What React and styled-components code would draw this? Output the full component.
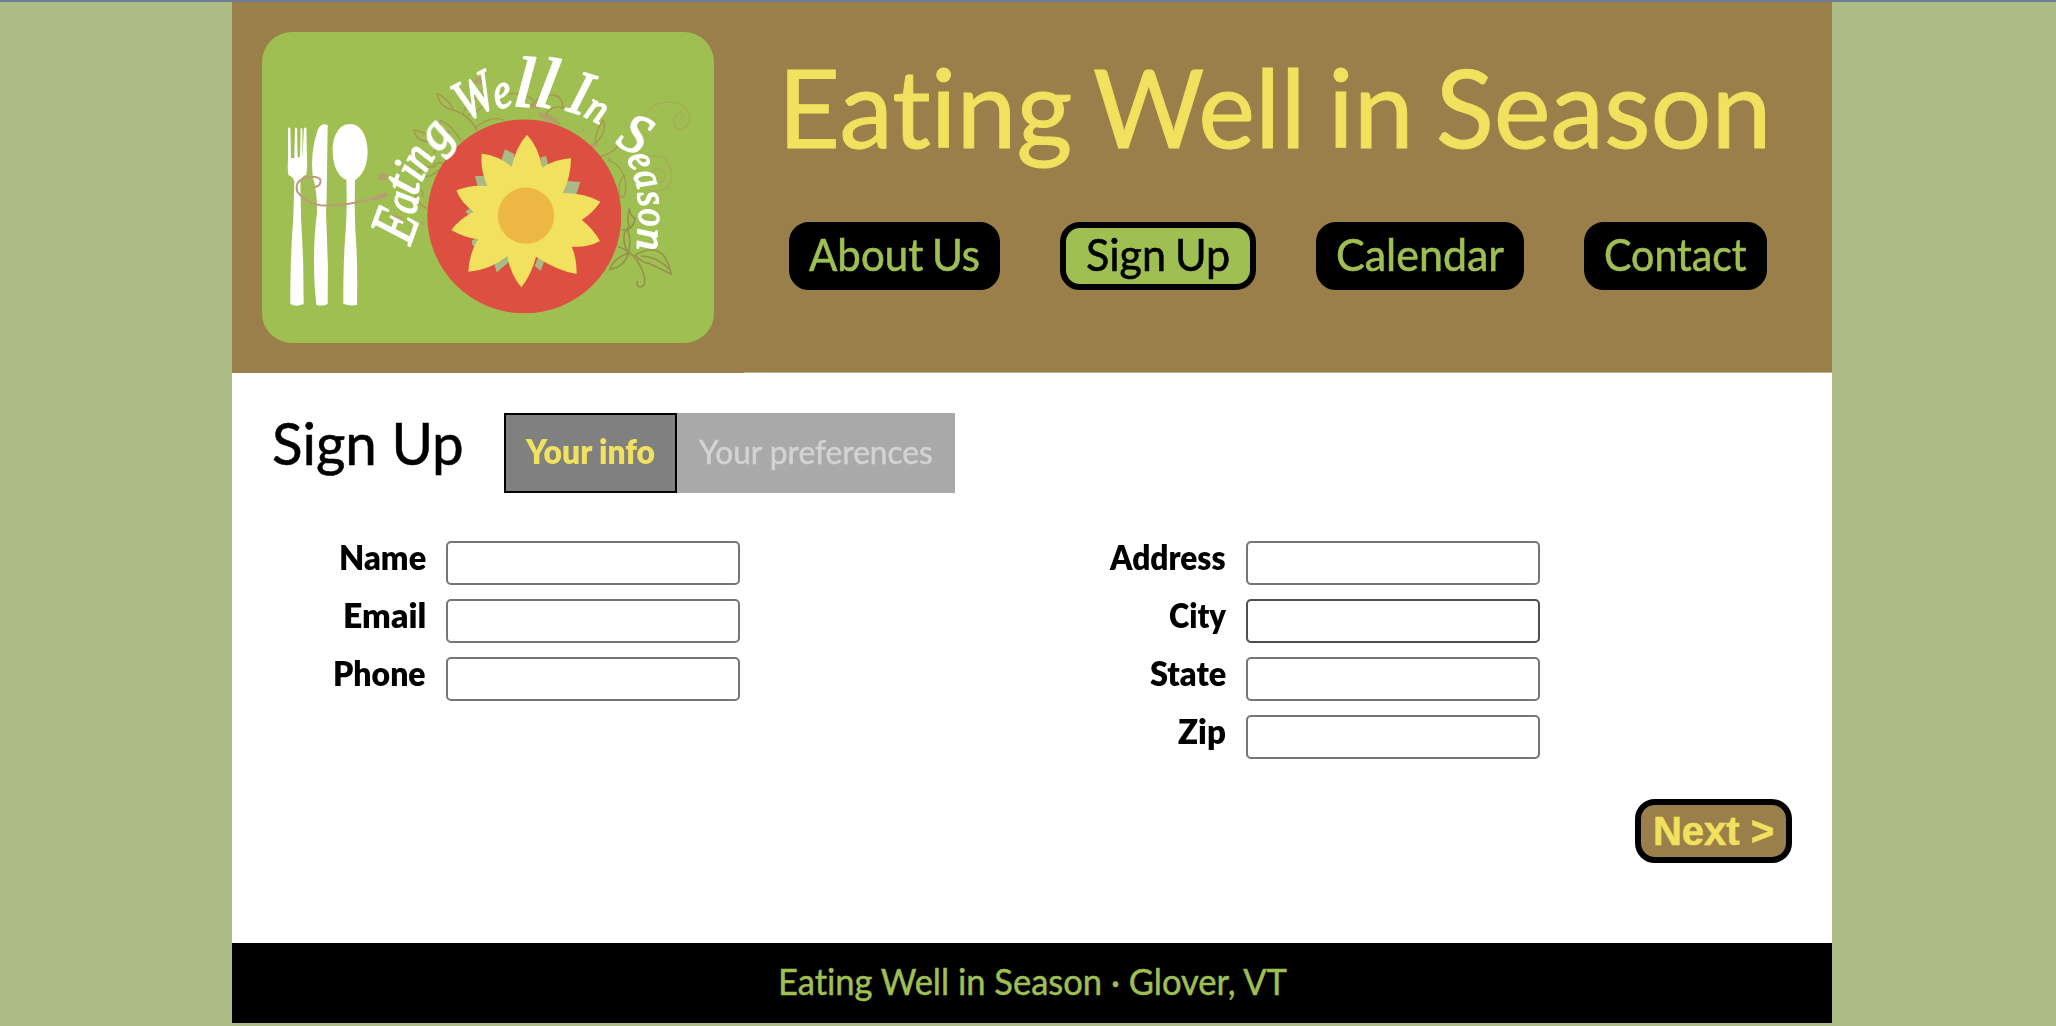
import React, { useLayoutEffect, useRef } from "react";
import styled, { createGlobalStyle } from "styled-components";

const c = {
  sage: "#adbc85",
  brown: "#9b7f4a",
  lime: "#9fbf53",
  yellow: "#f1e15e",
};

const GlobalStyle = createGlobalStyle`
  *, *::before, *::after { box-sizing: border-box; }
  body {
    margin: 0;
    background: ${c.sage};
    font-family: Lato, "Open Sans", sans-serif;
    font-variant-ligatures: none;
    color: #000;
  }
`;

const Screen = styled.div`
  height: 1026px;
  overflow: hidden;
  border-top: 2px solid #6d7c98;
  background: ${c.sage};
`;

const Page = styled.div`
  width: 1600px;
  margin: 0 224px 0 232px;
`;

const Header = styled.header`
  display: grid;
  grid-template-columns: 512px minmax(0, 1fr);
  align-items: start;
`;

const LogoPanel = styled.div`
  height: 371px;
  padding: 30px;
  background: ${c.brown};
`;

const LogoCard = styled.div`
  width: 452px;
  height: 311px;
  border-radius: 30px;
  background: ${c.lime};
  overflow: hidden;
  svg { display: block; }
`;

const Banner = styled.div`
  height: 370px;
  padding: 32px 65px 0 45px;
  background: ${c.brown};
`;

const Title = styled.h1`
  display: flex;
  margin: 0 0 0 -11px;
  height: 136px;
  font-weight: 400;
  font-size: 109px;
  line-height: 143px;
  word-spacing: -0.05em;
  -webkit-text-stroke: 1px currentColor;
  color: ${c.yellow};
`;

const Nav = styled.nav`
  display: flex;
  gap: 60px;
  margin-top: 52px;
`;

const NavLink = styled.a`
  display: block;
  flex: none;
  height: 68px;
  padding: 0 ${(p) => (p.$active ? 20 : 14)}px;
  border: 6px solid #000;
  border-radius: 20px;
  background: ${(p) => (p.$active ? c.lime : "#000")};
  color: ${(p) => (p.$active ? "#000" : c.lime)};
  font-size: 44px;
  line-height: 53px;
  word-spacing: -0.05em;
  -webkit-text-stroke: 0.6px currentColor;
  text-decoration: none;
`;

const Main = styled.main`
  height: 570px;
  padding: 40px;
  background: #fff;
`;

const Heading = styled.div`
  display: flex;
  align-items: flex-start;
`;

const PageName = styled.h2`
  margin: 0 40px 0 0;
  font-weight: 400;
  font-size: 58px;
  line-height: 60px;
  -webkit-text-stroke: 0.6px currentColor;
`;

const Step = styled.div`
  height: 80px;
  padding: 0 ${(p) => (p.$current ? 20 : 22)}px;
  border: ${(p) => (p.$current ? "2px solid #000" : "0 solid transparent")};
  background: ${(p) => (p.$current ? "#808080" : "#a9a9a9")};
  color: ${(p) => (p.$current ? c.yellow : "#d3d3d3")};
  font-weight: ${(p) => (p.$current ? 800 : 400)};
  font-size: 33px;
  line-height: ${(p) => (p.$current ? 73 : 77)}px;
  -webkit-text-stroke: ${(p) => (p.$current ? 0 : 0.5)}px currentColor;
`;

const Form = styled.form`
  display: grid;
  grid-template-columns: 800px minmax(0, 1fr);
  margin: 48px -40px 0;
`;

const Fields = styled.div`
  display: flex;
  flex-direction: column;
  gap: 14px;
`;

const Field = styled.label`
  display: grid;
  grid-template-columns: 194px 294px;
  column-gap: 20px;
  font-weight: 800;
  font-size: 33px;
  line-height: 33px;
  justify-items: end;
`;

const Input = styled.input`
  width: 294px;
  height: 44px;
  border: 2px solid ${(p) => (p.$hovered ? "#4f4f4f" : "#767676")};
  border-radius: 5px;
  background: #fff;
  outline: none;
`;

const Actions = styled.div`
  display: flex;
  justify-content: flex-end;
  margin-top: 40px;
`;

const NextButton = styled.button`
  width: 157px;
  height: 64px;
  padding: 0;
  border: 6px solid #000;
  border-radius: 20px;
  background: ${c.brown};
  color: ${c.yellow};
  font: 700 40px/52px "Liberation Sans", Arial, sans-serif;
  -webkit-text-stroke: 0.6px currentColor;
`;

const Footer = styled.footer`
  display: flex;
  justify-content: center;
  height: 80px;
  background: #000;
  color: ${c.lime};
  font-size: 36px;
  line-height: 77px;
  -webkit-text-stroke: 0.5px currentColor;
`;

const FitBox = styled.span`
  display: block;
  width: ${(p) => p.$width}px;
  white-space: nowrap;
`;

const FitInner = styled.span`
  display: inline-block;
  transform-origin: 0 50%;
`;

/* Condenses a line of text so that it fills the given width. */
function Fit({ width, children }) {
  const ref = useRef(null);
  useLayoutEffect(() => {
    const el = ref.current;
    el.style.transform = `scaleX(${width / el.offsetWidth})`;
  }, [width, children]);
  return (
    <FitBox $width={width}>
      <FitInner ref={ref}>{children}</FitInner>
    </FitBox>
  );
}

/* Each glyph of the curved name: [letter, x, y, rotation, font size, horizontal stretch] */
const LETTERS = [
  ["E", 570, 738, -70, 195, 0.72],
  ["a", 585, 646, -78, 145, 0.85],
  ["t", 588, 590, -72, 165, 0.95],
  ["i", 602, 550, -64, 145, 0.9],
  ["n", 616, 520, -60, 145, 0.85],
  ["g", 656, 460, -52, 150, 1.0],
  ["W", 736, 366, -28, 172, 0.82],
  ["e", 830, 328, -14, 150, 0.8],
  ["l", 876, 317, 4, 215, 1.1],
  ["l", 938, 315, 10, 215, 1.1],
  ["I", 1036, 330, 18, 190, 0.9],
  ["n", 1088, 348, 26, 125, 0.95],
  ["S", 1184, 432, 28, 170, 0.95],
  ["e", 1220, 474, 66, 125, 0.85],
  ["a", 1240, 522, 72, 125, 0.85],
  ["s", 1252, 580, 80, 125, 0.9],
  ["o", 1256, 628, 86, 125, 0.85],
  ["n", 1254, 684, 92, 125, 1.05],
];

function CurvedName() {
  return (
    <g
      fill="#fff"
      stroke="#fff"
      strokeWidth="5"
      strokeLinejoin="round"
      fontFamily='"Liberation Serif", serif'
      fontStyle="italic"
    >
      {LETTERS.map(([ch, x, y, turn, size, stretch], i) => (
        <text
          key={i}
          fontSize={size}
          transform={`translate(${x} ${y}) rotate(${turn}) scale(${stretch} 1)`}
        >
          {ch}
        </text>
      ))}
    </g>
  );
}

function Logo() {
  return (
    <svg width="452" height="311" viewBox="126 96 1356 933">
      <g fill="none" stroke="#a7894f" strokeWidth="4" strokeLinecap="round" opacity=".75">
        <path d="M770 390 Q748 345 700 330 Q655 320 652 280 Q690 300 700 330" />
        <path d="M730 340 Q745 290 800 285 Q795 330 745 345" />
        <path d="M765 385 Q810 345 850 360" />
        <path d="M722 420 Q690 370 662 362 Q650 385 690 398" />
        <path d="M640 425 Q590 430 582 390 Q620 395 640 425 Q655 445 640 460" />
        <path d="M645 500 Q600 500 590 525 Q630 540 655 510" />
        <path d="M620 625 Q575 600 592 570 Q612 565 608 590" />
        <path d="M640 495 Q660 485 668 490" />
        <path d="M930 320 Q960 280 1000 285 Q1030 290 1028 325 Q1000 310 975 345 L1018 372" />
        <path d="M850 285 Q900 270 940 300" />
        <path d="M1115 440 Q1165 400 1150 360 Q1130 385 1125 425" />
        <path d="M1140 470 Q1185 460 1205 420" />
        <path d="M1165 480 Q1215 500 1218 560 Q1215 600 1200 590 Q1190 560 1210 525" />
      </g>
      <g fill="none" stroke="#ab9f5a" strokeWidth="4" strokeLinecap="round" opacity=".6">
        <path d="M1270 350 Q1300 300 1360 307 Q1410 315 1408 360 Q1400 395 1370 385 Q1352 365 1370 345 Q1385 335 1393 352" />
        <path d="M1262 485 Q1300 455 1335 475 Q1370 520 1345 560 Q1320 580 1285 570" />
        <path d="M1290 530 Q1300 500 1328 510 Q1345 530 1325 546 Q1310 550 1312 535" />
      </g>
      <g fill="none" stroke="#957f47" strokeWidth="5" strokeLinecap="round" opacity=".7">
        <path d="M1195 740 Q1240 755 1262 800 Q1285 850 1265 860 Q1248 862 1252 845" />
        <path d="M1225 760 Q1200 715 1222 685 Q1235 720 1225 760 Q1215 800 1170 808 Q1180 775 1225 760" />
        <path d="M1245 765 Q1300 735 1330 765 Q1345 785 1354 823 Q1310 800 1285 790 Q1260 785 1245 765" />
        <path d="M1265 768 Q1310 770 1345 805" />
        <path d="M1208 690 Q1240 690 1245 655 Q1232 650 1228 625 Q1220 660 1228 682" />
      </g>
      <g fill="#b69c6d" opacity=".8">
        <ellipse cx="777" cy="242" rx="19" ry="10" />
        <ellipse cx="770" cy="277" rx="12" ry="8" />
        <ellipse cx="955" cy="312" rx="25" ry="10" transform="rotate(-30 955 312)" />
        <ellipse cx="985" cy="354" rx="34" ry="11" transform="rotate(22 985 354)" />
        <ellipse cx="1122" cy="435" rx="12" ry="6" />
        <ellipse cx="530" cy="658" rx="17" ry="12" />
        <ellipse cx="488" cy="530" rx="15" ry="11" />
        <ellipse cx="480" cy="590" rx="24" ry="8" transform="rotate(-20 480 590)" />
        <circle cx="1090" cy="392" r="5" />
        <circle cx="1170" cy="477" r="5" />
        <circle cx="608" cy="670" r="5" />
      </g>

      <circle cx="913" cy="649" r="291" fill="#dd5041" />
      <g fill="#a9bb84">
        <path d="M855 448 L883 462 L880 504 L843 482Z" />
        <path d="M962 472 L978 468 L987 505 L966 508Z" />
        <path d="M1042 543 L1081 546 L1068 585 L1024 584Z" />
        <path d="M765 528 L790 528 L806 564 L772 557Z" />
        <path d="M736 635 L750 624 L768 634 L748 646Z" />
        <path d="M755 722 L775 712 L766 742 L757 734Z" />
        <path d="M823 793 L864 762 L868 785 L830 817Z" />
        <path d="M958 764 L976 775 L962 812 L944 798Z" />
      </g>
      <path
        fill={c.yellow}
        d="M921 404 Q955 440 967 503 Q1005 478 1053 475 Q1053 530 1028 580 Q1090 578 1141 605
           Q1120 637 1085 660 Q1117 683 1140 723 Q1105 743 1055 740 Q1070 773 1070 822
           Q1012 812 948 770 Q935 822 904 862 Q872 825 862 768 Q812 810 745 815
           Q748 760 774 718 Q730 712 694 690 Q720 655 761 635 Q724 610 709 571
           Q752 553 802 558 Q780 510 785 461 Q832 465 875 500 Q888 440 921 404Z"
      />
      <circle cx="918" cy="647" r="84.5" fill="#ecb743" />

      <g fill="#fff">
        <path
          d="M204 383 H211 L213 474 H223 L225 383 H231 L233 472 H240 L242 385 H247 L247 474 L252 383 H259
             L261 475 Q263 500 259 524 Q244 528 241 545 L243 650 Q252 780 251 912 Q230 922 211 912
             Q210 780 220 650 L223 545 Q219 529 205 525 Q201 500 204 475Z"
        />
        <path
          d="M323 375 Q304 366 293 390 Q270 455 278 530 Q292 570 291 640 Q278 730 284 860 L289 914
             Q308 920 323 912 Q326 800 320 690 Q316 640 320 590Z"
        />
        <path
          d="M390 372 C424 372 443 410 443 457 C442 500 425 530 405 540 Q403 630 406 690 Q414 790 411 914
             Q390 920 370 911 Q369 790 377 690 Q382 620 379 540 C352 528 338 495 338 450
             C339 405 358 372 390 372Z"
        />
      </g>
      <path
        d="M280 562 Q305 560 301 538 Q288 525 255 533 Q222 546 232 575 Q255 608 300 616 Q380 618 440 600 L500 585"
        fill="none"
        stroke="#bd9a7d"
        strokeWidth="6"
        strokeLinecap="round"
      />
      <CurvedName />
    </svg>
  );
}

const LINKS = [
  { name: "About Us", width: 171 },
  { name: "Sign Up", width: 144, active: true },
  { name: "Calendar", width: 168 },
  { name: "Contact", width: 143 },
];

const CONTACT_FIELDS = [
  { name: "Name", width: 87 },
  { name: "Email", width: 83 },
  { name: "Phone", width: 93 },
];

const ADDRESS_FIELDS = [
  { name: "Address", width: 116 },
  { name: "City", width: 57, hovered: true },
  { name: "State", width: 76 },
  { name: "Zip", width: 48 },
];

function FieldList({ items }) {
  return (
    <Fields>
      {items.map((f) => (
        <Field key={f.name}>
          <Fit width={f.width}>{f.name}</Fit>
          <Input $hovered={f.hovered} />
        </Field>
      ))}
    </Fields>
  );
}

export default function App() {
  return (
    <>
      <GlobalStyle />
      <Screen>
        <Page>
          <Header>
            <LogoPanel>
              <LogoCard>
                <Logo />
              </LogoCard>
            </LogoPanel>
            <Banner>
              <Title>
                <Fit width={993}>Eating Well in Season</Fit>
              </Title>
              <Nav>
                {LINKS.map((l) => (
                  <NavLink key={l.name} $active={l.active}>
                    <Fit width={l.width}>{l.name}</Fit>
                  </NavLink>
                ))}
              </Nav>
            </Banner>
          </Header>
          <Main>
            <Heading>
              <PageName>
                <Fit width={192}>Sign Up</Fit>
              </PageName>
              <Step $current>
                <Fit width={129}>Your info</Fit>
              </Step>
              <Step>
                <Fit width={234}>Your preferences</Fit>
              </Step>
            </Heading>
            <Form>
              <FieldList items={CONTACT_FIELDS} />
              <FieldList items={ADDRESS_FIELDS} />
            </Form>
            <Actions>
              <NextButton type="button">Next &gt;</NextButton>
            </Actions>
          </Main>
          <Footer>
            <Fit width={509}>Eating Well in Season · Glover, VT</Fit>
          </Footer>
        </Page>
      </Screen>
    </>
  );
}
